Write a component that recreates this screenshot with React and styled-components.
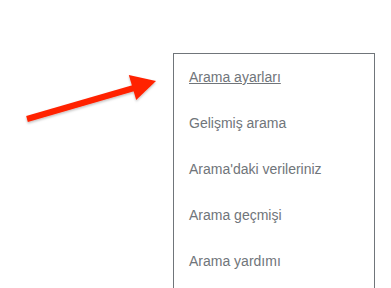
import styled, { createGlobalStyle } from "styled-components";

const GlobalStyle = createGlobalStyle`
    html, body {
        margin: 0;
        padding: 0;
        background: #fff;
        font-family: "Liberation Sans", Arial, sans-serif;
    }
`;

const Page = styled.div`
    display: flex;
    align-items: flex-start;
    padding-top: 53px;
    height: 288px;
    overflow: hidden;
    box-sizing: border-box;
`;

const Pointer = styled.svg`
    flex: none;
    width: 173px;
    height: 90px;
`;

const Menu = styled.ul`
    flex: none;
    width: 202px;
    margin: 0;
    padding: 0 0 12px;
    list-style: none;
    border: 1px solid #70757a;
    box-sizing: border-box;
`;

const Item = styled.li`
    height: 46px;
    padding: 13px 15px;
    box-sizing: border-box;
`;

const Link = styled.a`
    font-size: 14px;
    line-height: 20px;
    color: #70757a;
    text-decoration: ${(p) => (p.$active ? "underline" : "none")};
    white-space: nowrap;
`;

const items = [
    "Arama ayarları",
    "Gelişmiş arama",
    "Arama'daki verileriniz",
    "Arama geçmişi",
    "Arama yardımı",
];

const Arrow = () => (
    <Pointer viewBox="0 0 173 90">
        <defs>
            <filter id="shade" x="-10%" y="-30%" width="120%" height="160%">
                <feDropShadow dx="0" dy="1.5" stdDeviation="1.2" floodColor="#000" floodOpacity="0.25" />
            </filter>
        </defs>
        <g filter="url(#shade)" fill="#ff2200">
            <line x1="27" y1="66" x2="134" y2="35" stroke="#ff2200" strokeWidth="6" />
            <polygon points="156,28 128.8,22 136.2,47" />
        </g>
    </Pointer>
);

export default function App() {
    return (
        <>
            <GlobalStyle />
            <Page>
                <Arrow />
                <Menu>
                    {items.map((label, i) => (
                        <Item key={label}>
                            <Link $active={i === 0}>{label}</Link>
                        </Item>
                    ))}
                </Menu>
            </Page>
        </>
    );
}
